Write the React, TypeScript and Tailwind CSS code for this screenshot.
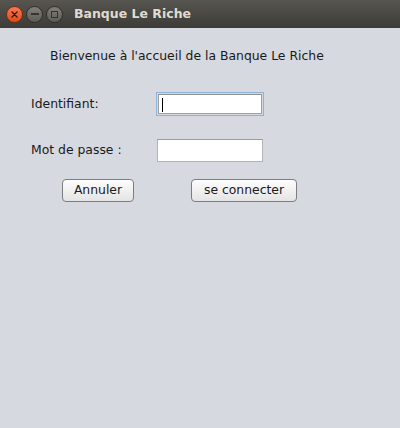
import { useState } from 'react'

const FONT = { fontFamily: '"DejaVu Sans", "Liberation Sans", sans-serif' }

function WindowButtons() {
  return (
    <div className="flex items-center gap-[3px] pl-[6px]">
      <span className="flex h-[17px] w-[17px] items-center justify-center rounded-full border border-[#7a2a12] bg-gradient-to-b from-[#f7794e] to-[#df4a16]">
        <svg width="7" height="7" viewBox="0 0 7 7">
          <path d="M1 1L6 6M6 1L1 6" stroke="#3c1608" strokeWidth="1.4" strokeLinecap="round" />
        </svg>
      </span>
      <span className="flex h-[17px] w-[17px] items-center justify-center rounded-full border border-[#2f2e2a] bg-gradient-to-b from-[#817f78] to-[#5d5b55]">
        <span className="block h-[1.5px] w-[8px] bg-[#35342f]" />
      </span>
      <span className="flex h-[17px] w-[17px] items-center justify-center rounded-full border border-[#2f2e2a] bg-gradient-to-b from-[#817f78] to-[#5d5b55]">
        <span className="block h-[7px] w-[7px] border border-[#35342f]" />
      </span>
    </div>
  )
}

export default function App() {
  const [login, setLogin] = useState('')
  const [password, setPassword] = useState('')

  return (
    <div className="flex h-[428px] w-[400px] flex-col bg-[#d6d9df] text-[12.4px] text-[#1a1a1a]" style={FONT}>
      {/* Title bar */}
      <div className="flex h-[28px] items-center bg-gradient-to-b from-[#56554f] to-[#3c3b37]">
        <WindowButtons />
        <span className="ml-[11px] text-[12.5px] font-bold text-[#dfdbd2]">Banque Le Riche</span>
      </div>

      {/* Form */}
      <div className="flex flex-col">
        <p className="ml-[50px] mt-[18px] leading-[20px]">Bienvenue à l'accueil de la Banque Le Riche</p>

        <div className="mt-[26px] flex items-center">
          <label className="ml-[31px] w-[125px]">Identifiant:</label>
          <div className="relative h-[24px] w-[108px] border border-[#8fb2d8] p-px">
            <input
              value={login}
              onChange={(e) => setLogin(e.target.value)}
              className="h-full w-full border border-[#a0a0a0] border-t-[#8e8e8e] bg-white px-[4px] outline-none"
            />
            {login === '' && <span className="pointer-events-none absolute left-[5px] top-[5px] h-[14px] w-px bg-black" />}
          </div>
        </div>

        <div className="mt-[23px] flex items-center">
          <label className="ml-[31px] w-[126px]">Mot de passe :</label>
          <input
            type="password"
            value={password}
            onChange={(e) => setPassword(e.target.value)}
            className="h-[23px] w-[106px] border border-[#b4b4b4] border-t-[#9a9a9a] bg-white px-[3px] outline-none"
          />
        </div>

        <div className="mt-[17px] flex">
          <button className="ml-[62px] h-[23px] w-[72px] rounded-[4px] border border-[#7d7d7d] bg-gradient-to-b from-[#fdfdfd] to-[#e4e4e4] leading-none">
            Annuler
          </button>
          <button className="ml-[57px] h-[23px] w-[106px] rounded-[4px] border border-[#7d7d7d] bg-gradient-to-b from-[#fdfdfd] to-[#e4e4e4] leading-none">
            se connecter
          </button>
        </div>
      </div>
    </div>
  )
}
